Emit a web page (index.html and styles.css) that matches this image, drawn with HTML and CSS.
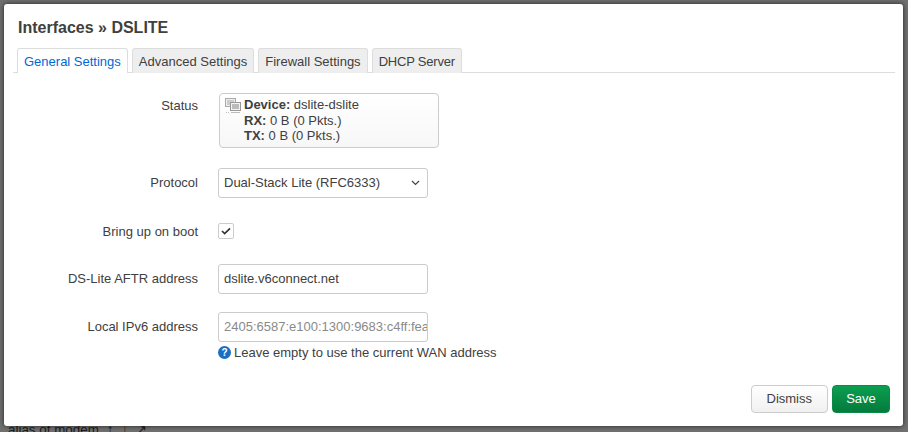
FILE: index.html
```html
<!DOCTYPE html>
<html lang="en">
<head>
<meta charset="utf-8">
<title>Interfaces » DSLITE</title>
<link rel="stylesheet" href="styles.css">
</head>
<body>
<div class="backdrop-text"><span>alias of modem</span><span>↑</span><span>↓</span><span>↗</span></div>
<div class="modal">
  <h4 class="title">Interfaces » DSLITE</h4>
  <ul class="tabs">
    <li class="tab active">General Settings</li>
    <li class="tab">Advanced Settings</li>
    <li class="tab">Firewall Settings</li>
    <li class="tab tab-tight">DHCP Server</li>
  </ul>
  <div class="form">
    <div class="row row-status">
      <div class="label">Status</div>
      <div class="status">
        <svg class="status-icon" width="16" height="16" viewBox="0 0 16 16">
          <rect x="0.5" y="0.5" width="10" height="8" fill="#eee" stroke="#aaa"/>
          <rect x="2" y="2" width="7" height="5" fill="#ccc"/>
          <rect x="5.5" y="4.5" width="10" height="8" fill="#f2f2f2" stroke="#999"/>
          <rect x="7" y="6" width="7" height="5" fill="#bbb"/>
          <path d="M6 14h9v1H6zM1 14h1v1H1zM3 14h1v1H3z" fill="#bbb"/>
        </svg>
        <div class="status-text">
          <div><b>Device:</b> dslite-dslite</div>
          <div><b>RX:</b> 0 B (0 Pkts.)</div>
          <div><b>TX:</b> 0 B (0 Pkts.)</div>
        </div>
      </div>
    </div>
    <div class="row row-protocol">
      <div class="label">Protocol</div>
      <div class="control select">
        <span>Dual-Stack Lite (RFC6333)</span>
        <svg width="9" height="6" viewBox="0 0 9 6"><path d="M1 1l3.5 3.5L8 1" fill="none" stroke="#444" stroke-width="1.2"/></svg>
      </div>
    </div>
    <div class="row row-boot">
      <div class="label">Bring up on boot</div>
      <div class="checkbox">
        <svg width="10" height="8" viewBox="0 0 11 9"><path d="M1 4.5l3 3L10 1.5" fill="none" stroke="#333" stroke-width="1.9"/></svg>
      </div>
    </div>
    <div class="row row-aftr">
      <div class="label">DS-Lite AFTR address</div>
      <div class="control">dslite.v6connect.net</div>
    </div>
    <div class="row row-ipv6">
      <div class="label">Local IPv6 address</div>
      <div class="field">
        <div class="control placeholder">2405:6587:e100:1300:9683:c4ff:fea</div>
        <div class="help"><span class="help-icon">?</span>Leave empty to use the current WAN address</div>
      </div>
    </div>
  </div>
  <div class="actions">
    <div class="btn">Dismiss</div>
    <div class="btn primary">Save</div>
  </div>
</div>
</body>
</html>
```
FILE: styles.css
```css
* { box-sizing: border-box; }
html, body { margin: 0; height: 100%; }
body {
  width: 908px;
  height: 432px;
  overflow: hidden;
  background: #707070;
  font-family: "Liberation Sans", Arial, sans-serif;
  font-size: 13px;
  color: #404040;
  padding: 4px 5px 6px 4px;
  position: relative;
}
.backdrop-text {
  position: absolute;
  left: 8px;
  top: 422px;
  display: flex;
  gap: 8px;
  color: #1c1c1c;
  font-size: 13.4px;
  white-space: nowrap;
}
.modal {
  position: relative;
  width: 899px;
  height: 422px;
  background: #fff;
  border-radius: 3px;
  padding: 0 8px 0 9px;
  box-shadow: 0 0 5px rgba(0,0,0,.7);
  display: flex;
  flex-direction: column;
}
.title {
  margin: 0;
  padding: 15px 0 0 5px;
  font-size: 16px;
  line-height: 17px;
  font-weight: 700;
  color: #404040;
  height: 44px;
}
.tabs {
  list-style: none;
  margin: 0;
  padding: 0 0 0 4px;
  display: flex;
  gap: 4px;
  height: 25px;
  border-bottom: 1px solid #ddd;
}
.tab {
  height: 25px;
  line-height: 25px;
  padding: 0 6px;
  background: #eee;
  border: 1px solid #ddd;
  border-bottom: 0;
  border-radius: 3px 3px 0 0;
  color: #404040;
}
.tab.active {
  background: #fff;
  color: #0069d6;
}
.tab-tight { letter-spacing: -0.2px; }
.form { flex: 1; display: flex; flex-direction: column; }
.row { display: flex; }
.label {
  width: 185px;
  text-align: right;
  flex: none;
  color: #404040;
  margin-right: 20px;
}
.row-status { margin-top: 20px; }
.row-status .label { line-height: 25px; }
.status {
  width: 220px;
  height: 55px;
  margin-left: 1px;
  border: 1px solid #ccc;
  border-radius: 4px;
  background: linear-gradient(#fff, #f7f7f7);
  display: flex;
  padding: 3px 5px;
  gap: 3px;
  line-height: 15.5px;
}
.status-icon { flex: none; margin-top: 1px; }
.row-protocol { margin-top: 20px; }
.row-protocol .label,
.row-aftr .label,
.row-ipv6 .label { line-height: 30px; }
.control {
  width: 210px;
  height: 30px;
  border: 1px solid #ccc;
  border-radius: 3px;
  line-height: 28px;
  padding: 0 5px;
  background: #fff;
  white-space: nowrap;
  overflow: hidden;
}
.select { display: flex; justify-content: space-between; align-items: center; padding-right: 7px; }
.placeholder { color: #8a8a8a; }
.row-boot { margin-top: 24px; align-items: center; height: 18px; }
.checkbox {
  width: 16px;
  height: 16px;
  border: 1px solid #ccc;
  border-radius: 2px;
  display: flex;
  align-items: center;
  justify-content: center;
}
.row-aftr { margin-top: 24px; }
.row-ipv6 { margin-top: 18px; }
.help { display: flex; align-items: center; gap: 3px; margin-top: 3px; line-height: 15px; white-space: nowrap; }
.help-icon {
  width: 13px;
  height: 13px;
  border-radius: 50%;
  background: #1a6fc0;
  color: #fff;
  font-size: 10px;
  font-weight: 700;
  line-height: 13px;
  text-align: center;
  flex: none;
}
.actions {
  display: flex;
  justify-content: flex-end;
  gap: 4px;
  padding: 0 5px 13px 0;
}
.btn {
  height: 28px;
  line-height: 26px;
  padding: 0 15px;
  border: 1px solid #ccc;
  border-radius: 4px;
  background: linear-gradient(#fff, #f0f0f0);
  color: #404040;
}
.btn.primary {
  width: 58px;
  padding: 0;
  text-align: center;
  color: #fff;
  border-color: #0a8a46;
  background: linear-gradient(#0a9f50, #057a3c);
}
```
